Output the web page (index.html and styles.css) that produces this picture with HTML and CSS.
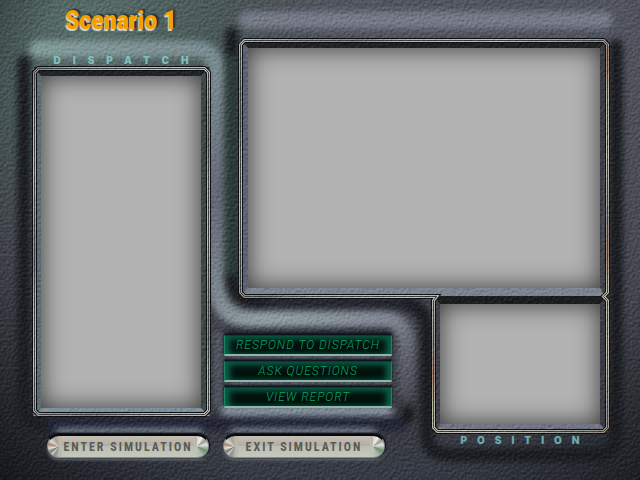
FILE: index.html
```html
<!DOCTYPE html>
<html lang="en">
<head>
    <meta charset="UTF-8">
    <meta name="viewport" content="width=device-width, initial-scale=1.0">
    <title>Scenario 1</title>
    <link rel="stylesheet" href="styles.css">
</head>
<body>
    <svg class="backdrop" viewBox="0 0 640 480" preserveAspectRatio="none" aria-hidden="true">
        <defs>
            <linearGradient id="base" x1="0" y1="0" x2="0" y2="1">
                <stop offset="0" stop-color="#50535d"/>
                <stop offset="0.5" stop-color="#454850"/>
                <stop offset="0.85" stop-color="#363941"/>
                <stop offset="1" stop-color="#343842"/>
            </linearGradient>
            <radialGradient id="green" gradientUnits="userSpaceOnUse" cx="90" cy="30" r="240">
                <stop offset="0" stop-color="#566d69"/>
                <stop offset="0.5" stop-color="#475957" stop-opacity="0.8"/>
                <stop offset="1" stop-color="#394747" stop-opacity="0"/>
            </radialGradient>
            <radialGradient id="corner" gradientUnits="userSpaceOnUse" cx="340" cy="160" r="460">
                <stop offset="0.7" stop-color="#000" stop-opacity="0"/>
                <stop offset="1" stop-color="#000" stop-opacity="0.6"/>
            </radialGradient>
            <linearGradient id="ridge" gradientUnits="userSpaceOnUse" x1="40" y1="40" x2="420" y2="400">
                <stop offset="0" stop-color="#809b98"/>
                <stop offset="0.3" stop-color="#76878e"/>
                <stop offset="0.45" stop-color="#626674"/>
                <stop offset="0.68" stop-color="#8f9da1"/>
                <stop offset="0.85" stop-color="#7f8491"/>
                <stop offset="1" stop-color="#3d3f48"/>
            </linearGradient>
            <linearGradient id="metal" gradientUnits="userSpaceOnUse" x1="0" y1="0" x2="90" y2="130" spreadMethod="repeat">
                <stop offset="0" stop-color="#c4c0b5"/>
                <stop offset="0.35" stop-color="#959593"/>
                <stop offset="0.5" stop-color="#a58270"/>
                <stop offset="0.65" stop-color="#b5b6a2"/>
                <stop offset="1" stop-color="#c4c0b5"/>
            </linearGradient>
            <filter id="soft" filterUnits="userSpaceOnUse" x="0" y="0" width="640" height="480" color-interpolation-filters="sRGB">
                <feGaussianBlur stdDeviation="3"/>
            </filter>
            <filter id="leather" filterUnits="userSpaceOnUse" x="0" y="0" width="640" height="480" color-interpolation-filters="sRGB">
                <feTurbulence type="fractalNoise" baseFrequency="0.38" numOctaves="2" seed="7"/>
                <feColorMatrix values="0 0 0 0 0  0 0 0 0 0  0 0 0 0 0  1 0 0 0 0"/>
                <feDiffuseLighting surfaceScale="1" diffuseConstant="0.75" lighting-color="#fff">
                    <feDistantLight azimuth="235" elevation="45"/>
                </feDiffuseLighting>
            </filter>
            <path id="leftFrame" d="M38 68H204L208 72V410L204 414H38L34 410V72Z"/>
            <path id="rightFrame" d="M244 40H603L607 44V292L603 296L607 300V427L603 431H437L433 427V300L436 296H244L240 292V44Z"/>
        </defs>

        <rect width="640" height="480" fill="url(#base)"/>
        <rect width="640" height="480" fill="url(#green)"/>
        <rect width="640" height="480" fill="url(#corner)"/>

        <!-- grooves -->
        <g filter="url(#soft)" fill="none" stroke-linecap="round">
            <path d="M24 62V405Q24 424 42 424H400" stroke="#1a1c20" stroke-width="14"/>
            <path d="M52 424H400" stroke="#212334" stroke-width="13"/>
            <path d="M232 34V275Q233 303 262 303H402Q427 305 427 332V436Q428 455 450 455H598Q616 455 616 436V46" stroke="#191b1f" stroke-width="14"/>
            <path d="M231 60V270" stroke="#2a3936" stroke-width="12"/>
            <path d="M270 303H400" stroke="#23252e" stroke-width="10"/>
            <path d="M408 412V417" stroke="#151619" stroke-width="12"/>
            <path d="M230 331H388" stroke="#20222c" stroke-width="8"/>
            <!-- ridges -->
            <path d="M38 49H194Q215 49 215 68V280Q217 319 250 319H384Q407 321 407 348V392" stroke="url(#ridge)" stroke-width="17"/>
            <path d="M247 20H604" stroke="#747886" stroke-width="17"/>
            <path d="M218 335V405" stroke="#555a68" stroke-width="7"/>
            <path d="M226 411H388" stroke="#8794a0" stroke-width="10"/>
            <path d="M230 359H388M230 385H388" stroke="#6d7280" stroke-width="4"/>
            <path d="M58 431H200M232 431H374" stroke="#9aaebb" stroke-width="4"/>
        </g>

        <!-- inner bezels -->
        <path d="M33 67H210L201 76H41Z" fill="#1d2224"/>
        <path d="M33 67L41 76V408L33 416Z" fill="#5a6870"/>
        <path d="M210 67L201 76V408L210 416Z" fill="#3a4644"/>
        <path d="M33 416L41 408H201L210 416Z" fill="#7b8d97"/>
        <path d="M240 40H608L600 48H248Z" fill="#1e2022"/>
        <path d="M240 40L248 48V288L240 296Z" fill="#5b6070"/>
        <path d="M608 40L600 48V304L608 296V432L600 424V288Z" fill="#383a42"/>
        <path d="M240 296L248 288H600L605 296Z" fill="#7a828f"/>
        <path d="M434 296H606L600 304H440Z" fill="#1a1b1d"/>
        <path d="M434 296L440 304V424L434 432Z" fill="#3c3f48"/>
        <path d="M434 432L440 424H600L608 432Z" fill="#6f7381"/>

        <g class="frame-lines" transform="translate(0.5 0.5)">
            <use href="#leftFrame" stroke="#0c0d10" stroke-width="5"/>
            <use href="#leftFrame" stroke="url(#metal)" stroke-width="3"/>
            <use href="#leftFrame" stroke="#3a3b3e" stroke-width="1"/>
            <use href="#rightFrame" stroke="#0c0d10" stroke-width="5"/>
            <use href="#rightFrame" stroke="url(#metal)" stroke-width="3"/>
            <use href="#rightFrame" stroke="#3a3b3e" stroke-width="1"/>
        </g>

        <rect class="grain" width="640" height="480" filter="url(#leather)"/>
    </svg>

    <main class="console">
        <h1 class="title">Scenario 1</h1>
        <h2 class="label label-dispatch">DISPATCH</h2>
        <section class="screen screen-dispatch" aria-label="Dispatch"></section>
        <section class="screen screen-main" aria-label="Simulation"></section>
        <section class="screen screen-position" aria-label="Position"></section>
        <h2 class="label label-position">POSITION</h2>

        <nav class="actions">
            <button class="led" type="button">RESPOND TO DISPATCH</button>
            <button class="led" type="button">ASK QUESTIONS</button>
            <button class="led" type="button">VIEW REPORT</button>
        </nav>

        <button class="pill pill-enter" type="button">ENTER SIMULATION</button>
        <button class="pill pill-exit" type="button">EXIT SIMULATION</button>
    </main>
</body>
</html>
```
FILE: styles.css
```css
* {
    box-sizing: border-box;
}

body {
    margin: 0;
    background-color: #33363d;
    font-family: "Liberation Sans", Arial, sans-serif;
}

/* leather panel behind the controls */
.backdrop {
    position: absolute;
    inset: 0;
    z-index: -1;
    width: 100%;
    height: 100%;
}

.frame-lines {
    fill: none;
}

.grain {
    mix-blend-mode: soft-light;
    opacity: 0.8;
}

/* the tracks share the proportions of the backdrop */
.console {
    display: grid;
    grid-template-columns: 41fr 160fr 22fr 25fr 145fr 47fr 160fr 40fr;
    grid-template-rows: 48fr 28fr 212fr 16fr 104fr 16fr 56fr;
    height: 100vh;
}

.console > * {
    min-width: 0;
    min-height: 0;
}

.title {
    grid-area: 1 / 2;
    margin: 0;
    padding-top: 6px;
    color: #f5a000;
    font-family: "Roboto Condensed", "Liberation Sans Narrow", "Arial Narrow", sans-serif;
    font-size: 26px;
    font-weight: 800;
    line-height: 28px;
    text-align: center;
    white-space: nowrap;
    text-shadow: -1px 2px 1px #d5dcda, 2px -1px 2px #1c2423;
}

.label {
    margin: 0;
    color: #7fbfbd;
    font-family: Inter, "Liberation Sans", sans-serif;
    font-size: 10px;
    font-weight: 900;
    line-height: 12px;
    text-align: center;
    white-space: nowrap;
}

.label-dispatch {
    grid-area: 2 / 2;
    align-self: end;
    padding: 0 0 10px 12px;
    letter-spacing: 12px;
}

.label-position {
    grid-area: 7 / 7;
    padding: 10px 0 0 10px;
    color: #6ca9a9;
    letter-spacing: 10px;
}

.screen {
    background-color: #b2b2b2;
    box-shadow: inset 0 0 24px rgba(0, 0, 0, 0.7);
}

.screen-dispatch {
    grid-area: 3 / 2 / 6 / 3;
}

.screen-main {
    grid-area: 2 / 5 / 4 / 8;
}

.screen-position {
    grid-area: 5 / 7 / 7 / 8;
}

.actions {
    grid-area: 5 / 4 / 6 / 6;
    display: flex;
    flex-direction: column;
    justify-content: flex-end;
    gap: 5px;
    padding: 0 1px;
}

.led {
    height: 21px;
    padding: 0;
    border: 1px solid #1c8265;
    border-top-color: #093d2f;
    border-bottom: 2px solid #8fb5ab;
    background-color: #03110d;
    box-shadow: inset 0 3px 6px #0b5842, inset 7px 0 9px -4px #128062, inset -7px 0 9px -4px #128062, 0 -2px 2px #0b1217;
    color: #05a468;
    font-family: Roboto, "Liberation Sans", sans-serif;
    font-size: 12px;
    font-style: italic;
    font-weight: 300;
    line-height: 18px;
    letter-spacing: 1px;
    white-space: nowrap;
    cursor: pointer;
}

.pill {
    align-self: start;
    height: 24px;
    margin-top: 10px;
    padding: 1px 0 0;
    border: 1px solid #85888a;
    border-top: 2px solid #08090a;
    border-radius: 12px;
    background:
        conic-gradient(at 80% 50%, #bcb6ab, #b5bcb0 50%, #8b9086 58%, #c9c8c0 62%, #73786f 67%, #e4e4dc 72%, #a08a78 78%, #dad7cd 84%, #a99e92 92%, #bcb6ab) left / 14px 100% no-repeat,
        conic-gradient(at 20% 50%, #d2cec5, #eeeeea 8%, #969c92 15%, #e2e4dc 22%, #6f8b74 32%, #a9bca8 42%, #c0c4b9 50%, #bcb6ab) right / 14px 100% no-repeat,
        linear-gradient(#c5bfb4, #b3aea4 45%, #bcbeb4 50%, #c5c9be);
    box-shadow: 0 -1px 2px #05060a, 1px 0 2px #05060a, 0 2px 3px #6b737c;
    color: #5a5a54;
    font-family: "Roboto Condensed", "Liberation Sans Narrow", "Arial Narrow", sans-serif;
    font-size: 12px;
    font-weight: 700;
    line-height: 20px;
    letter-spacing: 2px;
    white-space: nowrap;
    cursor: pointer;
}

.pill-enter {
    grid-area: 7 / 2;
    margin-right: -8px;
    margin-left: 6px;
}

.pill-exit {
    grid-area: 7 / 4 / 8 / 6;
    margin-right: 8px;
}

.led:hover,
.pill:hover {
    filter: brightness(1.2);
}
```
